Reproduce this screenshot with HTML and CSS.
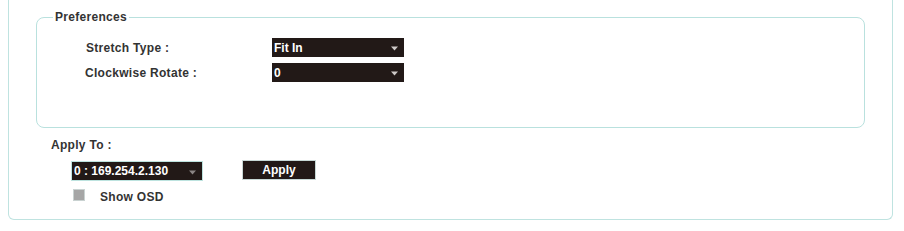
FILE: index.html
```html
<!DOCTYPE html>
<html>
<head>
<meta charset="utf-8">
<link rel="stylesheet" href="styles.css">
</head>
<body>
<div class="panel">
  <fieldset class="prefs">
    <legend>Preferences</legend>
    <div class="grid">
      <label class="lbl lbl-a">Stretch Type :</label>
      <div class="sel">
        <select><option>Fit In</option></select>
        <svg class="arrow" width="7" height="5" viewBox="0 0 7 5"><path d="M0 0.5 L7 0.5 L3.5 4.5 Z" fill="#cfcac8"/></svg>
      </div>
      <label class="lbl">Clockwise Rotate :</label>
      <div class="sel">
        <select><option>0</option></select>
        <svg class="arrow" width="7" height="5" viewBox="0 0 7 5"><path d="M0 0.5 L7 0.5 L3.5 4.5 Z" fill="#cfcac8"/></svg>
      </div>
    </div>
  </fieldset>
  <div class="apply-title">Apply To :</div>
  <div class="apply-row">
    <div class="sel sel-ip">
      <select><option>0 : 169.254.2.130</option></select>
      <svg class="arrow" width="7" height="5" viewBox="0 0 7 5"><path d="M0 0.5 L7 0.5 L3.5 4.5 Z" fill="#8a8584"/></svg>
    </div>
    <button class="btn">Apply</button>
  </div>
  <div class="osd-row">
    <span class="check"></span>
    <span class="osd-label">Show OSD</span>
  </div>
</div>
</body>
</html>
```
FILE: styles.css
```css
html, body {
  margin: 0;
  padding: 0;
  background: #ffffff;
}
body {
  padding: 0 11px 0 8px;
  font-family: "Liberation Sans", Arial, sans-serif;
  font-size: 12px;
  color: #2e2e2e;
  letter-spacing: 0.3px;
}
.panel {
  border: 1px solid #bfe3e0;
  border-top: none;
  border-radius: 0 0 6px 6px;
  height: 220px;
  padding-top: 10px;
  box-sizing: border-box;
  background: #fff;
}
.prefs {
  margin: 0 27px;
  padding: 0 0 45px 0;
  border: 1px solid #b9e1de;
  border-radius: 8px;
  min-width: 0;
}
.prefs legend {
  margin-left: 16px;
  padding: 0 2px;
  font-weight: bold;
  font-size: 12px;
  line-height: 14px;
  color: #333;
}
.grid {
  margin-top: 14px;
  margin-left: 48px;
  display: grid;
  grid-template-columns: 187px 132px;
  grid-auto-rows: 19px;
  row-gap: 6px;
  align-items: center;
}
.lbl {
  font-weight: bold;
  color: #333;
  line-height: 14px;
}
.lbl-a { padding-left: 1px; }
.sel {
  position: relative;
  width: 132px;
  height: 19px;
}
.sel select {
  appearance: none;
  -webkit-appearance: none;
  width: 100%;
  height: 100%;
  margin: 0;
  padding: 0 0 0 2px;
  border: none;
  border-radius: 0;
  background: #221917;
  color: #fff;
  font-family: "Liberation Sans", Arial, sans-serif;
  font-weight: bold;
  font-size: 12px;
  outline: none;
}
.arrow {
  position: absolute;
  right: 6px;
  top: 8px;
  pointer-events: none;
}
.apply-title {
  margin: 10px 0 0 42px;
  font-weight: bold;
  line-height: 14px;
  color: #333;
}
.apply-row {
  display: flex;
  align-items: flex-start;
  margin: 8px 0 0 62px;
  height: 21px;
}
.sel-ip {
  width: 132px;
  height: 20px;
  margin-top: 1px;
  border: 1px solid #bde3df;
  box-sizing: border-box;
}
.btn {
  margin-left: 39px;
  width: 74px;
  height: 20px;
  padding: 0;
  border: 1px solid #c8d8d6;
  background: #221917;
  color: #fff;
  font-family: "Liberation Sans", Arial, sans-serif;
  font-weight: bold;
  font-size: 12px;
  border-radius: 0;
}
.osd-row {
  display: flex;
  align-items: center;
  margin: 7px 0 0 64px;
}
.check {
  width: 12px;
  height: 12px;
  background: #a6a6a6;
  border: 1px solid #c9d2d1;
  box-sizing: border-box;
}
.osd-label {
  margin-left: 15px;
  font-weight: bold;
  color: #333;
  position: relative;
  top: 2px;
}
```
